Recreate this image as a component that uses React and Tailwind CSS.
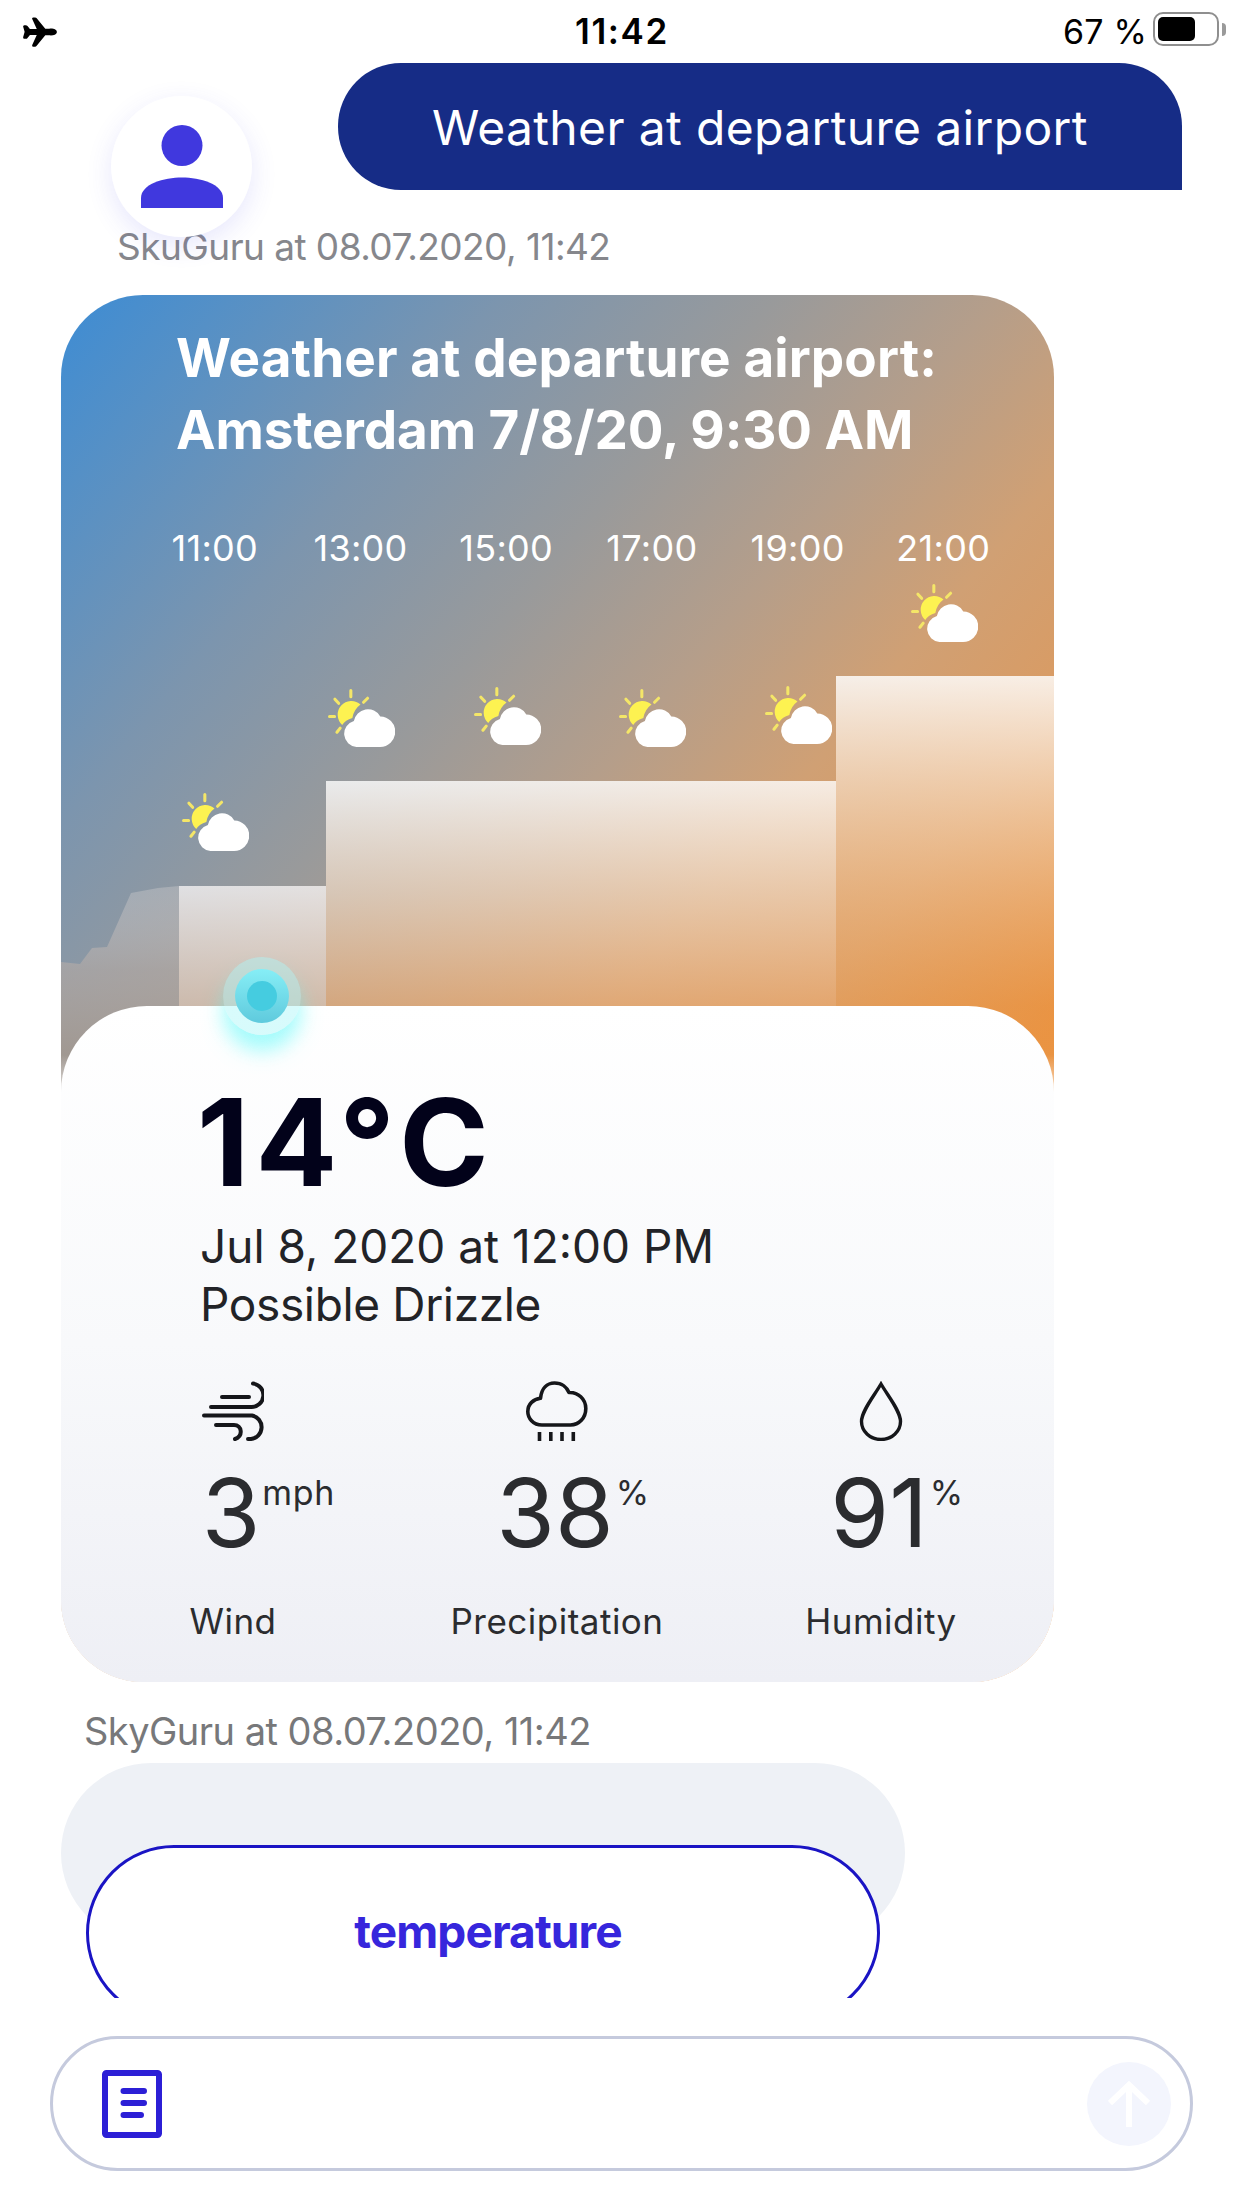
import React from "react";
import { IoAirplane } from "react-icons/io5";

const hours = [
  { time: "11:00", offset: 221 },
  { time: "13:00", offset: 117 },
  { time: "15:00", offset: 115 },
  { time: "17:00", offset: 117 },
  { time: "19:00", offset: 114 },
  { time: "21:00", offset: 12 },
];

const metrics = [
  { icon: WindIcon, value: "3", unit: "mph", label: "Wind" },
  { icon: RainIcon, value: "38", unit: "%", label: "Precipitation" },
  { icon: DropIcon, value: "91", unit: "%", label: "Humidity" },
];

function SunCloudIcon() {
  return (
    <svg className="h-[58px] w-[67px]" viewBox="0 0 66 57" fill="none">
      <path
        d="M22.5 1.5v6M6.8 10l3.7 4M1.5 27h5M8.8 42.5l3.2-4M35 13l4-4"
        stroke="#f4e668"
        strokeWidth="3"
        strokeLinecap="round"
      />
      <path
        d="M14 35.3A13.2 13.2 0 0 1 32 15.3Q25.5 20 24 28.5Q17 30.5 14 35.3Z"
        fill="#fdf251"
      />
      <path
        d="M28 57A13 13 0 0 1 25.5 31.5A14 14 0 0 1 51.5 27A15 15 0 0 1 51 57Z"
        fill="#fff"
      />
    </svg>
  );
}

function WindIcon() {
  return (
    <svg
      className="h-[60px] w-[62px]"
      viewBox="0 0 62 60"
      fill="none"
      stroke="#15161a"
      strokeWidth="4"
      strokeLinecap="round"
      strokeLinejoin="round"
    >
      <path d="M20 16H47M9 26H49A11.8 11.8 0 0 0 51 2.5" />
      <path d="M2 34.5H50A11.9 11.9 0 0 1 49 58H46" />
      <path d="M14 44H32C40 44 41.500 55 33 58" />
    </svg>
  );
}

function RainIcon() {
  return (
    <svg
      className="h-[60px] w-[62px]"
      viewBox="0 0 62 60"
      fill="none"
      stroke="#15161a"
      strokeWidth="3.6"
      strokeLinejoin="round"
    >
      <path d="M16 44C7 44 1.800 37 1.800 30.500C1.800 23 7.500 18 14.500 17.300C15.500 7.500 21 2 28.500 2C36 2 41 6.500 43 11.500C52 11 59.800 18 59.800 27.500C59.800 37 53 44 44.500 44Z" />
      <path d="M13.500 51v9M24.800 51v9M36 51v9M47.300 51v9" />
    </svg>
  );
}

function DropIcon() {
  return (
    <svg
      className="h-[60px] w-[44px]"
      viewBox="0 0 44 60"
      fill="none"
      stroke="#15161a"
      strokeWidth="3.400"
    >
      <path d="M22 3C15 15 2.500 30 2.500 40.500A19.500 18 0 0 0 41.500 40.500C41.500 30 29 15 22 3Z" />
    </svg>
  );
}

function StatusBar() {
  return (
    <div className="flex h-[63px] shrink-0 pl-[22px] pr-[16px] leading-[63px] text-black">
      <div className="w-[553px] pt-[14px]">
        <IoAirplane className="size-[36px]" />
      </div>
      <div className="text-[35px] font-semibold tracking-[1.600px]">11:42</div>
      <div className="ml-auto flex">
        <span className="text-[34px] tracking-[0.200px]">67 %</span>
        <div className="ml-[6px] mt-[12px] h-[34px] w-[66px] rounded-[10px] border-2 border-[#8f8f8f] p-[3px]">
          <div className="h-full w-[37px] rounded-[5px] bg-black" />
        </div>
        <div className="ml-[3px] mt-[23px] h-[13px] w-[4px] rounded-r-full bg-[#9a9a9a]" />
      </div>
    </div>
  );
}

function Avatar() {
  return (
    <div className="relative z-10 ml-[111px] mt-[33px] flex size-[141px] shrink-0 justify-center rounded-full bg-white pt-[29px] shadow-[0_8px_26px_rgba(70,70,230,0.13)]">
      <svg className="h-[83px] w-[84px]" viewBox="0 0 84 83" fill="#4038de">
        <circle cx="42" cy="20.500" r="20.500" />
        <path d="M1 83V73C1 59 24 52.500 42 52.500S83 59 83 73V83Z" />
      </svg>
    </div>
  );
}

function Chart() {
  return (
    <svg
      className="absolute inset-x-0 top-0 h-[811px] w-[993px]"
      viewBox="0 0 993 811"
    >
      <defs>
        <linearGradient id="past" x1="0" y1="591" x2="0" y2="760" gradientUnits="userSpaceOnUse">
          <stop stopColor="#dcd8d8" stopOpacity="0.32" />
          <stop offset="0.5" stopColor="#b5aaa4" stopOpacity="0.6" />
          <stop offset="1" stopColor="#a3988f" stopOpacity="0.85" />
        </linearGradient>
        <linearGradient id="low" x1="0" y1="591" x2="0" y2="711" gradientUnits="userSpaceOnUse">
          <stop stopColor="#fbf8f8" stopOpacity="0.75" />
          <stop offset="1" stopColor="#e2c8b4" stopOpacity="0.7" />
        </linearGradient>
        <linearGradient id="mid" x1="0" y1="486" x2="0" y2="711" gradientUnits="userSpaceOnUse">
          <stop stopColor="#fff" stopOpacity="0.8" />
          <stop offset="0.5" stopColor="#f3dcc6" stopOpacity="0.66" />
          <stop offset="1" stopColor="#e8ac76" stopOpacity="0.66" />
        </linearGradient>
        <linearGradient id="high" x1="0" y1="381" x2="0" y2="711" gradientUnits="userSpaceOnUse">
          <stop stopColor="#fff" stopOpacity="0.83" />
          <stop offset="1" stopColor="#eba45c" stopOpacity="0.35" />
        </linearGradient>
      </defs>
      <path d="M0 667L19 669L31 653L46 652L70 598L97 593L118 591V811H0Z" fill="url(#past)" />
      <path d="M118 591H265V740H118Z" fill="url(#low)" />
      <path d="M265 486H775V740H265Z" fill="url(#mid)" />
      <path d="M775 381H993V811H775Z" fill="url(#high)" />
    </svg>
  );
}

function WeatherCard() {
  return (
    <div className="relative ml-[61px] h-[1387px] w-[993px] shrink-0 overflow-hidden rounded-[82px] bg-[linear-gradient(130deg,#3d8cd4_0px,#5590c6_130px,#7c95ae_340px,#999a9b_550px,#b59e8a_720px,#d0a074_880px,#da9b62_1030px,#e98b35_1230px)]">
      <Chart />
      {/* Forecast */}
      <div className="relative h-[711px] pt-[27px] text-white">
        <h2 className="whitespace-nowrap pl-[115px] text-[53px] font-bold leading-[72px]">
          <span className="tracking-[0.1px]">Weather at departure airport:</span>
          <br />
          <span className="tracking-[-0.1px]">Amsterdam 7/8/20, 9:30 AM</span>
        </h2>
        <div className="ml-[81px] mt-[58px] flex">
          {hours.map((hour) => (
            <div key={hour.time} className="flex w-[145.7px] flex-col items-center">
              <span className="text-[36px] leading-[48px] tracking-[0.3px]">{hour.time}</span>
              <div className="pl-[2px]" style={{ marginTop: hour.offset }}>
                <SunCloudIcon />
              </div>
            </div>
          ))}
        </div>
      </div>

      {/* The card fades out beneath the sheet */}
      <div className="absolute inset-x-0 bottom-0 h-[627px] bg-linear-to-b from-white/0 to-white to-[56px]" />

      {/* Details sheet */}
      <div className="relative h-[676px] rounded-t-[86px] bg-linear-to-b from-white via-[#f8f9fb] to-[#eeeff5] pt-[76px]">
        <div className="pl-[139px]">
          <div className="-ml-[3px] text-[121px] font-bold leading-[120px] tracking-[6.3px] text-[#02021a]">
            14°C
          </div>
          <div className="mt-[15px] text-[46px] leading-[58px] text-[#222327]">
            Jul 8, 2020 at 12:00 PM
            <br />
            <span className="tracking-[-0.35px]">Possible Drizzle</span>
          </div>
        </div>
        <div className="ml-[10px] mt-[48px] grid w-[972px] grid-cols-3">
          {metrics.map(({ icon: Icon, value, unit, label }) => (
            <div key={label} className="flex flex-col items-center text-[#2b2c2f]">
              <Icon />
              <div className="relative -left-[2px] mt-[25px] text-[95px] leading-[94px]">
                {value}
                <span className="absolute left-full top-[7px] pl-[2px] text-[34px] leading-[40px] tracking-[0.7px]">
                  {unit}
                </span>
              </div>
              <div className="mt-[39px] text-[35px] leading-[44px] tracking-[0.5px]">{label}</div>
            </div>
          ))}
        </div>
      </div>

      {/* Current time marker */}
      <div className="absolute left-[162px] top-[662px] flex size-[78px] items-center justify-center rounded-full bg-[#a8f6f8]/45 shadow-[0_16px_20px_rgba(90,250,250,0.55)]">
        <div className="flex size-[54px] items-center justify-center rounded-full bg-linear-to-b from-[#86eef6] to-[#5fcadd]">
          <div className="size-[30px] rounded-full bg-[#45cce0]" />
        </div>
      </div>
    </div>
  );
}

function InputBar() {
  return (
    <div className="ml-[50px] mt-[38px] flex h-[135px] w-[1143px] shrink-0 items-center rounded-full border-[3px] border-[#c5cadd] pl-[49px] pr-[19px]">
      <svg
        className="h-[68px] w-[60px]"
        viewBox="0 0 60 68"
        fill="none"
        stroke="#2c1fd6"
        strokeWidth="6"
        strokeLinecap="round"
      >
        <rect x="3" y="3" width="54" height="62" rx="1.5" />
        <path d="M21.5 21H42M21.5 33H42M21.5 45H39" />
      </svg>
      <div className="ml-auto flex size-[84px] items-center justify-center rounded-full bg-[#f3f5fd]">
        <svg className="h-[48px] w-[42px]" viewBox="0 0 42 48" fill="none" stroke="#fff" strokeWidth="6">
          <path d="M21 47V5M2 23L21 5L40 23" />
        </svg>
      </div>
    </div>
  );
}

export default function App() {
  return (
    <div className="flex h-[2208px] w-[1242px] flex-col overflow-hidden bg-white font-['Inter',sans-serif]">
      <StatusBar />

      <div className="flex h-[127px] shrink-0">
        <Avatar />
        <div className="ml-[86px] w-[844px] whitespace-nowrap rounded-l-[63px] rounded-tr-[63px] bg-[#162c86] pl-[94px] pt-px text-[48px] leading-[128px] tracking-[0.35px] text-white">
          Weather at departure airport
        </div>
      </div>

      <div className="h-[105px] shrink-0 whitespace-nowrap pl-[117px] pt-[8px] text-[37px] leading-[97px] tracking-[-0.55px] text-[#86878c]">
        SkuGuru at 08.07.2020, 11:42
      </div>

      <WeatherCard />

      <div className="h-[81px] shrink-0 whitespace-nowrap pl-[84px] pt-[17px] text-[38px] leading-[64px] tracking-[-0.52px] text-[#77787a]">
        SkyGuru at 08.07.2020, 11:42
      </div>

      <div className="h-[235px] shrink-0 overflow-hidden pl-[61px]">
        <div className="h-[180px] w-[844px] rounded-[90px] bg-[#eef1f6] pl-[25px] pt-[82px]">
          <button className="flex h-[176px] w-[794px] items-center justify-center rounded-full border-[3px] border-[#1a14c4] bg-white pb-[3px] pl-[10px] text-[46px] font-bold tracking-[-0.9px] text-[#3626dc]">
            temperature
          </button>
        </div>
      </div>

      <InputBar />
    </div>
  );
}
